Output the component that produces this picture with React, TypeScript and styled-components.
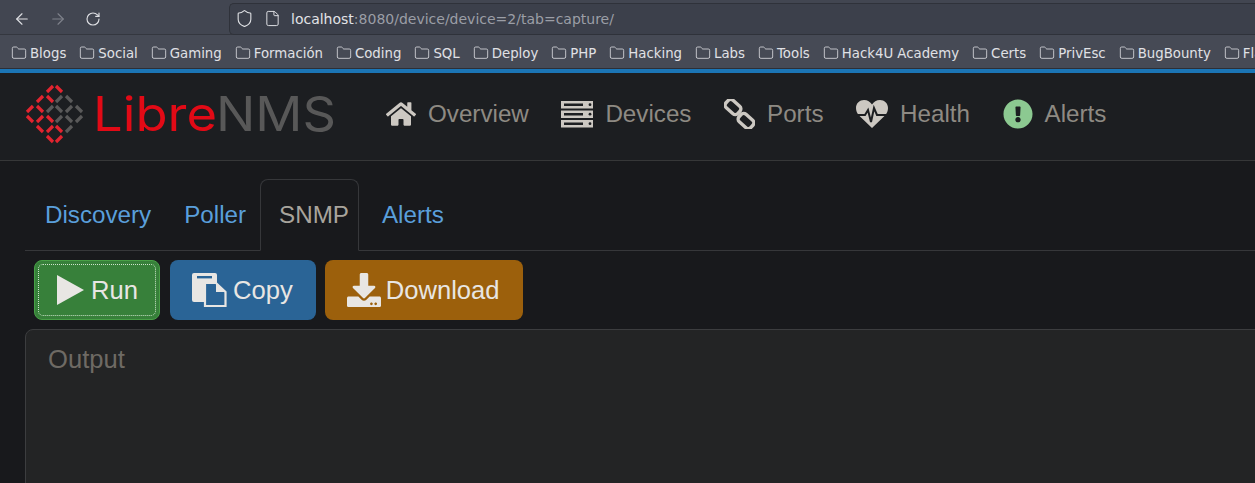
import { ReactNode } from 'react';
import styled, { createGlobalStyle } from 'styled-components';
import { ArrowLeft, ArrowRight, File, Folder, RotateCw, Shield } from 'lucide-react';
import { FaDownload, FaExclamationCircle, FaHome } from 'react-icons/fa';

const BOOKMARKS = [
  'Blogs', 'Social', 'Gaming', 'Formación', 'Coding', 'SQL', 'Deploy', 'PHP', 'Hacking', 'Labs',
  'Tools', 'Hack4U Academy', 'Certs', 'PrivEsc', 'BugBounty', 'Flags',
];

// dashes of the logo lattice: x, y, lean, colour
const RED = '#e3242f';
const GRAY = '#5a5a5a';
const LATTICE: [number, number, 1 | -1, string][] = [
  [26, 5, 1, RED], [35, 5, -1, RED],
  [16, 15, 1, RED], [26, 15, -1, RED], [35, 15, 1, GRAY], [45, 15, -1, GRAY],
  [6, 25, 1, RED], [16, 25, -1, RED], [26, 25, 1, GRAY], [35, 25, -1, GRAY], [45, 25, 1, GRAY], [55, 25, -1, GRAY],
  [6, 35, -1, RED], [16, 35, 1, RED], [26, 35, -1, RED], [35, 35, 1, GRAY], [45, 35, -1, GRAY], [55, 35, 1, GRAY],
  [16, 45, -1, RED], [26, 45, 1, RED], [35, 45, -1, RED], [45, 45, 1, GRAY],
  [26, 55, -1, RED], [35, 55, 1, RED],
];

const ServerIcon = () => (
  <svg width={32} height={27} viewBox="0 0 32 27">
    {[0, 9.5, 19].map((y) => (
      <g key={y}>
        <rect x={0} y={y} width={32} height={7.5} fill="currentColor" />
        <rect x={3} y={y + 2.5} width={19} height={2.5} fill="#1c1e21" />
        <circle cx={29} cy={y + 3.7} r={1.4} fill="#1c1e21" />
      </g>
    ))}
  </svg>
);

const LinkIcon = () => (
  <svg width={31} height={30} viewBox="0 0 31 30" fill="none" stroke="currentColor" strokeWidth={3.4}>
    <rect x={1} y={3} width={16} height={10} rx={3.5} transform="rotate(42 9 8)" />
    <rect x={14} y={17} width={16} height={10} rx={3.5} transform="rotate(42 22 22)" />
  </svg>
);

const HeartIcon = () => (
  <svg width={32} height={30} viewBox="0 0 32 30">
    <path
      d="M16 29 L3 16.5 C1 14.5 0 11.5 0 9 C0 4 3.8 1 8 1 C11.5 1 14.3 3 16 5.5 C17.7 3 20.5 1 24 1 C28.2 1 32 4 32 9 C32 11.5 31 14.5 29 16.5 Z"
      fill="currentColor"
    />
    <polyline points="0,16 9,16 12,11 15,23 18,9 21,16 32,16" fill="none" stroke="#1c1e21" strokeWidth={2} />
  </svg>
);

const PlayIcon = () => (
  <svg width={27} height={30} viewBox="0 0 27 30">
    <polygon points="0,0 27,15 0,30" fill="currentColor" />
  </svg>
);

const CopyIcon = () => (
  <svg width={35} height={34} viewBox="0 0 35 34">
    <rect x={0} y={0} width={25} height={29} rx={2} fill="currentColor" />
    <rect x={5} y={3} width={15} height={2.4} fill="#2a6496" />
    <path d="M13 10 H24 L33.5 19 V33 H13 Z" fill="#2a6496" stroke="currentColor" strokeWidth={2.2} />
    <path d="M24 10 L33.5 19 H24 Z" fill="currentColor" />
  </svg>
);

const NAV_ITEMS: { label: string; icon: ReactNode; tone?: string }[] = [
  { label: 'Overview', icon: <FaHome size={30} /> },
  { label: 'Devices', icon: <ServerIcon /> },
  { label: 'Ports', icon: <LinkIcon /> },
  { label: 'Health', icon: <HeartIcon /> },
  { label: 'Alerts', icon: <FaExclamationCircle size={30} />, tone: '#8cc991' },
];

const App = () => {
  return (
    <Page>
      <GlobalStyle />
      <BrowserChrome>
        <Toolbar>
          <ToolButtons>
            <ArrowLeft size={18} strokeWidth={1.5} color="#dfe0e4" />
            <ArrowRight size={18} strokeWidth={1.5} color="#7f828b" />
            <RotateCw size={16} strokeWidth={1.7} color="#dfe0e4" />
          </ToolButtons>
          <UrlBar>
            <Shield size={19} strokeWidth={1.4} color="#dfe0e4" />
            <File size={17} strokeWidth={1.4} color="#dfe0e4" />
            <UrlText>
              <b>localhost</b>:8080/device/device=2/tab=capture/
            </UrlText>
          </UrlBar>
        </Toolbar>
        <BookmarkBar>
          {BOOKMARKS.map((name) => (
            <Bookmark key={name}>
              <Folder size={16} strokeWidth={1.2} />
              {name}
            </Bookmark>
          ))}
        </BookmarkBar>
      </BrowserChrome>
      <AccentLine />
      <Navbar>
        <Logo width={312} height={60} viewBox="0 0 312 60">
          {LATTICE.map(([x, y, lean, color]) => (
            <line
              key={`${x}-${y}`}
              x1={x - 3 * lean}
              y1={y + 3}
              x2={x + 3 * lean}
              y2={y - 3}
              stroke={color}
              strokeWidth={3.2}
            />
          ))}
          <LogoText x={69} y={47} fill="#e20a16" textLength={124} lengthAdjust="spacingAndGlyphs">
            Libre
          </LogoText>
          <LogoText x={192} y={47} fill="#585858" textLength={120} lengthAdjust="spacingAndGlyphs">
            NMS
          </LogoText>
        </Logo>
        <NavList>
          {NAV_ITEMS.map((item) => (
            <NavItem key={item.label}>
              <NavIcon $tone={item.tone}>{item.icon}</NavIcon>
              {item.label}
            </NavItem>
          ))}
        </NavList>
      </Navbar>
      <Content>
        <Tabs>
          <Tab>Discovery</Tab>
          <Tab>Poller</Tab>
          <ActiveTab>SNMP</ActiveTab>
          <Tab>Alerts</Tab>
        </Tabs>
        <Actions>
          <RunButton type="button">
            <FocusRing>
              <PlayIcon />
              Run
            </FocusRing>
          </RunButton>
          <ActionButton type="button" $bg="#2a6496" $gap={6}>
            <CopyIcon />
            Copy
          </ActionButton>
          <ActionButton type="button" $bg="#9c600c" $gap={5}>
            <FaDownload size={34} />
            Download
          </ActionButton>
        </Actions>
        <Output placeholder="Output" readOnly />
      </Content>
    </Page>
  );
};

export default App;

const GlobalStyle = createGlobalStyle`
  html, body {
    margin: 0;
    height: 100%;
    overflow: hidden;
    background: #18191c;
  }
`;

const Page = styled.div`
  height: 483px;
  overflow: hidden;
  font-family: 'Liberation Sans', Arial, sans-serif;
`;

const BrowserChrome = styled.div`
  background: #464a55;
  font-family: 'DejaVu Sans', sans-serif;
  font-size: 13.3px;
`;

const Toolbar = styled.div`
  display: flex;
  align-items: center;
  height: 35px;
  padding-top: 3px;
  box-sizing: border-box;
  border-bottom: 1px solid #34373f;
  background: #424651;
`;

const ToolButtons = styled.div`
  display: flex;
  align-items: center;
  gap: 18px;
  width: 229px;
  padding-left: 13px;
  box-sizing: border-box;
`;

const UrlBar = styled.div`
  flex: 1;
  display: flex;
  align-items: center;
  gap: 10px;
  height: 32px;
  padding-left: 5px;
  background: #3c404b;
  border: 1px solid #2f323a;
  border-right: none;
  border-radius: 5px 0 0 5px;
  box-sizing: border-box;
`;

const UrlText = styled.span`
  font-size: 14px;
  color: #9b9ea6;
  b {
    font-weight: 400;
    color: #e2e3e7;
  }
`;

const BookmarkBar = styled.div`
  display: flex;
  align-items: center;
  gap: 13px;
  height: 34px;
  padding: 3px 0 0 11px;
  box-sizing: border-box;
  overflow: hidden;
  white-space: nowrap;
  color: #e0e1e5;
  border-bottom: 1px solid #2c2f37;
`;

const Bookmark = styled.span`
  display: inline-flex;
  align-items: center;
  gap: 3px;
  flex: none;
`;

const AccentLine = styled.div`
  height: 4px;
  background: #1b75b5;
`;

const Navbar = styled.nav`
  display: flex;
  align-items: center;
  height: 88px;
  padding: 0 0 5px 24px;
  box-sizing: border-box;
  background: #1c1e21;
  border-bottom: 1px solid #363738;
`;

const Logo = styled.svg`
  flex: none;
`;

const LogoText = styled.text`
  font-family: 'Inter', sans-serif;
  font-size: 48px;
  font-weight: 400;
`;

const NavList = styled.div`
  display: flex;
  align-items: center;
  gap: 32.6px;
  margin-left: 50px;
`;

const NavItem = styled.a`
  display: flex;
  align-items: center;
  gap: 12px;
  font-size: 24.2px;
  color: #8e8a83;
`;

const NavIcon = styled.span<{ $tone?: string }>`
  display: inline-flex;
  color: ${(p) => p.$tone ?? '#ccc8c2'};
`;

const Content = styled.main`
  padding: 18px 0 0 25px;
`;

const Tabs = styled.div`
  display: flex;
  height: 72px;
  padding-left: 1px;
  box-sizing: border-box;
  border-bottom: 1px solid #36373a;
`;

const Tab = styled.a`
  display: flex;
  align-items: center;
  height: 71px;
  padding: 0 14px 0 19px;
  font-size: 24.2px;
  color: #5a9fdb;
`;

const ActiveTab = styled(Tab)`
  height: 72px;
  padding: 0 9px 0 18px;
  margin-right: 4px;
  color: #a8a49c;
  background: #18191c;
  border: 1px solid #36373a;
  border-bottom-color: #18191c;
  border-radius: 8px 8px 0 0;
  box-sizing: border-box;
`;

const Actions = styled.div`
  display: flex;
  gap: 9px;
  margin: 9px 0 9px 9px;
`;

const ActionButton = styled.button<{ $bg: string; $gap?: number }>`
  display: flex;
  align-items: center;
  gap: ${(p) => p.$gap ?? 6}px;
  height: 60px;
  padding: 0 23px 0 22px;
  border: none;
  border-radius: 8px;
  background: ${(p) => p.$bg};
  color: #e8e6e3;
  font: 25.6px 'Liberation Sans', Arial, sans-serif;
`;

const RunButton = styled(ActionButton).attrs({ $bg: '#37803a' })`
  width: 126px;
  margin-right: 1px;
  padding: 3px;
  border: 1px solid #48a046;
`;

const FocusRing = styled.span`
  flex: 1;
  height: 100%;
  display: flex;
  align-items: center;
  gap: 7px;
  padding-left: 18px;
  box-sizing: border-box;
  border: 1px dotted #cfe3cc;
  border-radius: 5px;
`;

const Output = styled.textarea`
  display: block;
  width: 1300px;
  height: 220px;
  padding: 15px 22px;
  box-sizing: border-box;
  resize: none;
  outline: none;
  border: 1px solid #3c3d3f;
  border-radius: 8px;
  background: #232425;
  font: 25.6px 'Liberation Sans', Arial, sans-serif;

  &::placeholder {
    color: #6e6a64;
    opacity: 1;
  }
`;
